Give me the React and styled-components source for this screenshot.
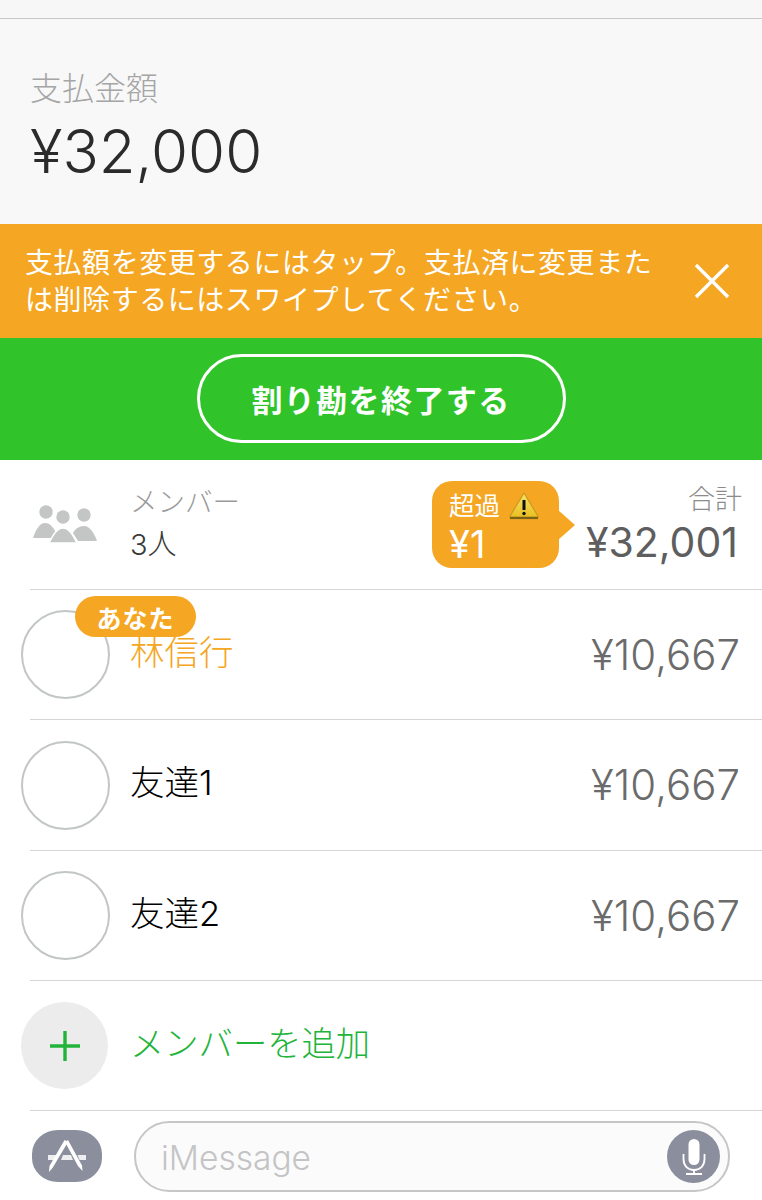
import React from "react";
import styled, { createGlobalStyle } from "styled-components";

const Global = createGlobalStyle`
  html, body { margin: 0; padding: 0; background: #fff; }
  * { box-sizing: border-box; }
  body { font-family: "Inter", "Noto Sans CJK JP", sans-serif; }
`;
const Page = styled.div`
  width: 762px; height: 1200px; overflow: hidden; display: flex; flex-direction: column;
  font-family: "Inter", "Noto Sans CJK JP", sans-serif; font-weight: 300;
`;
const TopStrip = styled.div`
  height: 19px; background: #f7f7f7; border-bottom: 1px solid #c9c9c9;
`;
const Header = styled.header`
  height: 205px; background: #f8f8f8; padding: 50px 30px 0; display: flex; flex-direction: column;
`;
const HeaderLabel = styled.div`
  font-size: 32px; line-height: 40px; color: #a5a5a5; font-weight: 300;
`;
const HeaderAmount = styled.div`
  font-size: 60px; line-height: 70px; color: #2b2b2b; font-weight: 300; margin-top: 7px;
`;
const Notice = styled.div`
  height: 114px; background: #f5a623; display: flex; align-items: center; justify-content: space-between;
  padding: 0 32px 0 25px; color: #fff;
`;
const NoticeText = styled.div`
  width: 640px; font-size: 28px; line-height: 37.5px; font-weight: 400; letter-spacing: 0.55px; margin-top: 2px;
`;
const GreenBar = styled.div`
  height: 122px; background: #30c42a; display: flex; align-items: center; justify-content: center;
  padding: 0 0 1px 0;
`;
const FinishButton = styled.div`
  width: 369px; height: 89px; border: 3px solid #fff; border-radius: 45px; color: #fff;
  display: flex; align-items: center; justify-content: center;
  font-size: 31px; font-weight: 700; letter-spacing: 1.4px;
`;
const Row = styled.div`
  position: relative; height: ${p => p.$h || 130}px; margin-left: 30px; display: flex; align-items: center;
  border-bottom: 1px solid #d6d6d6;
`;
const Avatar = styled.div`
  width: 89px; height: 89px; border-radius: 50%; margin-left: -9px; flex: none;
  border: 2px solid #c2c6c4; background: #fff;
`;
const AddCircle = styled.div`
  width: 87px; height: 87px; border-radius: 50%; margin-left: -9px; flex: none; background: #ececec;
  display: flex; align-items: center; justify-content: center;
`;
const Name = styled.div`
  margin-left: ${p => p.$gap || 20}px; font-size: ${p => p.$size || 34.5}px; line-height: 40px; color: ${p => p.$color || "#000"}; margin-top: -4px;
`;
const Amount = styled.div`
  margin-left: auto; padding-right: 22px; font-size: 42px; line-height: 50px; color: #6b6b6b; font-weight: 300;
`;
const MemberIcon = styled.div`
  width: 68px; margin-left: 1px; flex: none; display: flex;
`;
const MemberText = styled.div`
  margin-left: 31px; display: flex; flex-direction: column; margin-top: -3px;
`;
const MemberLabel = styled.div`
  font-size: 27.5px; line-height: 38px; color: #9a9a9a;
`;
const MemberCount = styled.div`
  font-size: 29px; line-height: 38px; color: #3a3a3a; margin-top: 5px;
`;
const Total = styled.div`
  margin-left: auto; padding-right: 24px; display: flex; flex-direction: column; align-items: flex-end; margin-top: -2px;
`;
const TotalLabel = styled.div`
  font-size: 27px; line-height: 36px; color: #8c8c8c; margin-right: -4px;
`;
const TotalAmount = styled.div`
  font-size: 41px; line-height: 48px; color: #5e5e5e; font-weight: 400;
`;
const Bubble = styled.div`
  position: absolute; left: 402px; top: 21px; width: 127px; height: 87px; border-radius: 20px; background: #f5a623;
  color: #fff; padding: 8px 0 0 17px;
  &::after {
    content: ""; position: absolute; left: 126px; top: 29px; border-left: 17px solid #f5a623;
    border-top: 15px solid transparent; border-bottom: 15px solid transparent;
  }
`;
const BubbleTop = styled.div`
  display: flex; align-items: center; gap: 9px; font-size: 25.5px; line-height: 34px; font-weight: 400;
`;
const BubbleAmount = styled.div`
  font-size: 38px; line-height: 40px; font-weight: 400; margin-top: 1px;
`;
const YouBadge = styled.div`
  position: absolute; left: 45px; top: 6px; width: 121px; height: 41px; border-radius: 21px; background: #f5a623;
  color: #fff; font-size: 25px; font-weight: 700; letter-spacing: 1px; display: flex; align-items: center; justify-content: center;
`;
const Composer = styled.div`
  flex: 1; display: flex; align-items: flex-start; padding: 10px 32px 0 32px; gap: 32px;
`;
const AppButton = styled.div`
  width: 70px; height: 52px; margin-top: 9px; border-radius: 26px / 24px; background: #8b8f9d; flex: none;
  display: flex; align-items: center; justify-content: center;
`;
const InputPill = styled.div`
  flex: 1; height: 71px; border-radius: 36px; border: 2px solid #c6c6c6; background: #fbfbfb;
  display: flex; align-items: center; justify-content: space-between; padding: 0 8px 0 25px;
`;
const Placeholder = styled.div`
  font-size: 33.5px; color: #c4c4c6; font-weight: 300; margin-top: 2px;
`;
const MicButton = styled.div`
  width: 53px; height: 53px; border-radius: 50%; background: #8b8f9d; display: flex; align-items: center; justify-content: center;
`;

const CloseIcon = () => (
  <svg width="36" height="36" viewBox="0 0 36 36" fill="none" stroke="#fff" strokeWidth="3.4">
    <path d="M2 2 L34 34 M34 2 L2 34" />
  </svg>
);
const PeopleIcon = () => (
  <svg width="68" height="40" viewBox="0 0 68 40" fill="#c3c6c4">
    <circle cx="15" cy="7" r="6.7" />
    <circle cx="32" cy="12" r="6.7" />
    <circle cx="53" cy="10" r="6.7" />
    <path d="M2 33 C5 24 9 18 14 18 C19 18 23 23 25 28 L20 33 Z" />
    <path d="M42 28 C44 24 48 21 53 21 C59 21 63 28 66 36 L47 36 Z" />
    <path d="M18 38 C22 30 26 23 32 23 C38 23 42 30 46 38 Z" stroke="#fff" strokeWidth="1.5" />
  </svg>
);
const WarnIcon = () => (
  <svg width="30" height="28" viewBox="0 0 30 28">
    <defs>
      <linearGradient id="warnFill" x1="0" y1="0" x2="0" y2="1">
        <stop offset="0" stopColor="#f8e36a" />
        <stop offset="1" stopColor="#eabf22" />
      </linearGradient>
    </defs>
    <path d="M15 1 L29.5 25 H0.5 Z" fill="url(#warnFill)" stroke="#c99a1e" strokeWidth="1.2" strokeLinejoin="round" />
    <path d="M1 26 H29" stroke="#7d6318" strokeWidth="2.2" />
    <path d="M15 8 V18" stroke="#111" strokeWidth="3" />
    <circle cx="15" cy="21.5" r="1.7" fill="#111" />
  </svg>
);
const PlusIcon = () => (
  <svg width="32" height="32" viewBox="0 0 32 32" stroke="#22b43a" strokeWidth="3.4">
    <path d="M16 1 V31 M1 16 H31" />
  </svg>
);
const AppIcon = () => (
  <svg width="70" height="52" viewBox="0 0 70 52" fill="#fff">
    <g opacity="0.85">
      <path d="M16 25 H24.5 L22.5 30 H16 Z" />
      <path d="M31 25 H39 L41 30 H29 Z" />
      <path d="M45.5 25 H54 V30 H47.5 Z" />
    </g>
    <path d="M32.5 10 L36 12 L20.5 38 L17 42 L17.5 36 Z" />
    <path d="M36 10 L33 12 L46 36 L50.5 41 L50 35.5 Z" />
  </svg>
);
const MicIcon = () => (
  <svg width="28" height="36" viewBox="0 0 28 36" fill="none" stroke="#fff">
    <rect x="8.5" y="0" width="11" height="26" rx="5.5" fill="#fff" stroke="none" />
    <path d="M3.5 15 V20 C3.5 27 8 31 14 31 C20 31 24.5 27 24.5 20 V15" strokeWidth="1.8" />
    <path d="M14 31 V35 M6 35 H22" strokeWidth="1.8" />
  </svg>
);

const members = [
  { name: "友達1", height: 131 },
  { name: "友達2", height: 130 },
];

export default function App() {
  return (
    <Page>
      <Global />
      <TopStrip />
      <Header>
        <HeaderLabel>支払金額</HeaderLabel>
        <HeaderAmount>¥32,000</HeaderAmount>
      </Header>
      <Notice>
        <NoticeText>支払額を変更するにはタップ。支払済に変更または削除するにはスワイプしてください。</NoticeText>
        <CloseIcon />
      </Notice>
      <GreenBar>
        <FinishButton>割り勘を終了する</FinishButton>
      </GreenBar>
      <Row>
        <MemberIcon><PeopleIcon /></MemberIcon>
        <MemberText>
          <MemberLabel>メンバー</MemberLabel>
          <MemberCount>3人</MemberCount>
        </MemberText>
        <Bubble>
          <BubbleTop>超過<WarnIcon /></BubbleTop>
          <BubbleAmount>¥1</BubbleAmount>
        </Bubble>
        <Total>
          <TotalLabel>合計</TotalLabel>
          <TotalAmount>¥32,001</TotalAmount>
        </Total>
      </Row>
      <Row>
        <Avatar />
        <YouBadge>あなた</YouBadge>
        <Name $color="#f5a623">林信行</Name>
        <Amount>¥10,667</Amount>
      </Row>
      {members.map(m => (
        <Row key={m.name} $h={m.height}>
          <Avatar />
          <Name>{m.name}</Name>
          <Amount>¥10,667</Amount>
        </Row>
      ))}
      <Row>
        <AddCircle><PlusIcon /></AddCircle>
        <Name $color="#22b43a" $size={34.3} $gap={22}>メンバーを追加</Name>
      </Row>
      <Composer>
        <AppButton><AppIcon /></AppButton>
        <InputPill>
          <Placeholder>iMessage</Placeholder>
          <MicButton><MicIcon /></MicButton>
        </InputPill>
      </Composer>
    </Page>
  );
}
